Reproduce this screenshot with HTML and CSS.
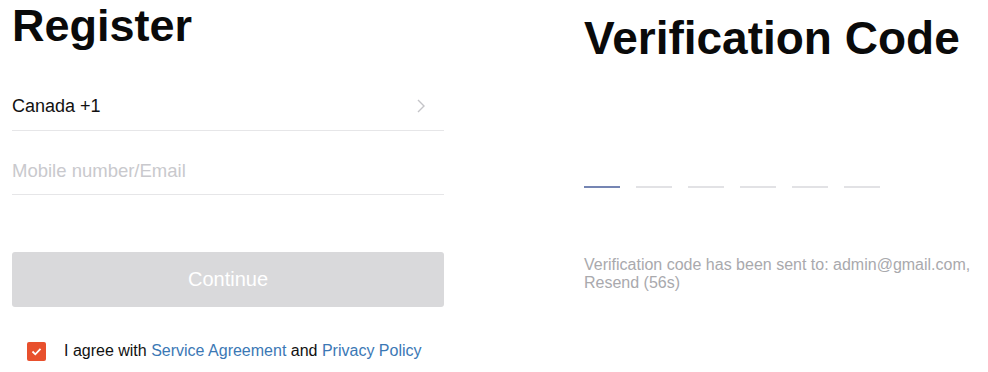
FILE: index.html
```html
<!DOCTYPE html>
<html>
<head>
<meta charset="utf-8">
<link rel="stylesheet" href="styles.css">
</head>
<body>
<div class="page">
  <section class="register">
    <h1 class="title">Register</h1>
    <div class="row country">
      <span>Canada +1</span>
      <svg class="chev" width="10" height="16" viewBox="0 0 10 16"><path d="M2 2 L8 8 L2 14" fill="none" stroke="#c4c4c8" stroke-width="1.4"/></svg>
    </div>
    <div class="row input">
      <span class="placeholder">Mobile number/Email</span>
    </div>
    <div class="btn">Continue</div>
    <div class="agree">
      <span class="check"><svg width="19" height="19" viewBox="0 0 19 19"><path d="M5.5 9.5 L8.3 12.3 L13.5 6.8" fill="none" stroke="#fff" stroke-width="1.8"/></svg></span>
      <span class="agree-text">I agree with <span class="link">Service Agreement</span> and <span class="link">Privacy Policy</span></span>
    </div>
  </section>
  <section class="verify">
    <h1 class="title">Verification Code</h1>
    <div class="dashes">
      <span class="dash active"></span>
      <span class="dash"></span>
      <span class="dash"></span>
      <span class="dash"></span>
      <span class="dash"></span>
      <span class="dash"></span>
    </div>
    <p class="sent">Verification code has been sent to: admin@gmail.com,<br>Resend (56s)</p>
  </section>
</div>
</body>
</html>
```

FILE: styles.css
```css
html, body {
  margin: 0;
  padding: 0;
  background: #fff;
}
body {
  font-family: "Liberation Sans", Arial, sans-serif;
  color: #111;
}
.page {
  display: flex;
  padding-left: 12px;
  gap: 140px;
}
.register {
  width: 432px;
  display: flex;
  flex-direction: column;
}
.title {
  margin: 0;
  font-size: 45px;
  font-weight: bold;
  line-height: 52px;
  color: #0a0a0a;
}
.row {
  display: flex;
  align-items: center;
  justify-content: space-between;
  font-size: 18px;
  line-height: 24px;
  border-bottom: 1px solid #e6e6e8;
}
.country {
  margin-top: 42px;
  padding-bottom: 12px;
}
.chev {
  margin-right: 18px;
}
.input {
  padding-top: 28px;
  padding-bottom: 11px;
}
.placeholder {
  color: #c9c9cd;
  font-size: 18.5px;
}
.btn {
  margin-top: 57px;
  height: 55px;
  background: #d9d9db;
  border-radius: 3px;
  color: #fff;
  font-size: 20px;
  display: flex;
  align-items: center;
  justify-content: center;
}
.agree {
  margin-top: 34px;
  display: flex;
  align-items: center;
  padding-left: 15px;
  gap: 18px;
  font-size: 16px;
  line-height: 20px;
}
.check {
  width: 19px;
  height: 19px;
  background: #e8502d;
  border-radius: 2px;
  display: block;
}
.check svg { display: block; }
.link {
  color: #3b78b5;
}
.verify {
  padding-top: 10px;
}
.verify .title {
  font-size: 46px;
  line-height: 56px;
}
.dashes {
  margin-top: 120px;
  display: flex;
  gap: 16px;
}
.dash {
  width: 36px;
  height: 2px;
  background: #e2e2e5;
}
.dash.active {
  background: #7585b3;
}
.sent {
  margin: 68px 0 0;
  font-size: 16px;
  line-height: 18px;
  color: #a9a9ad;
}
```
